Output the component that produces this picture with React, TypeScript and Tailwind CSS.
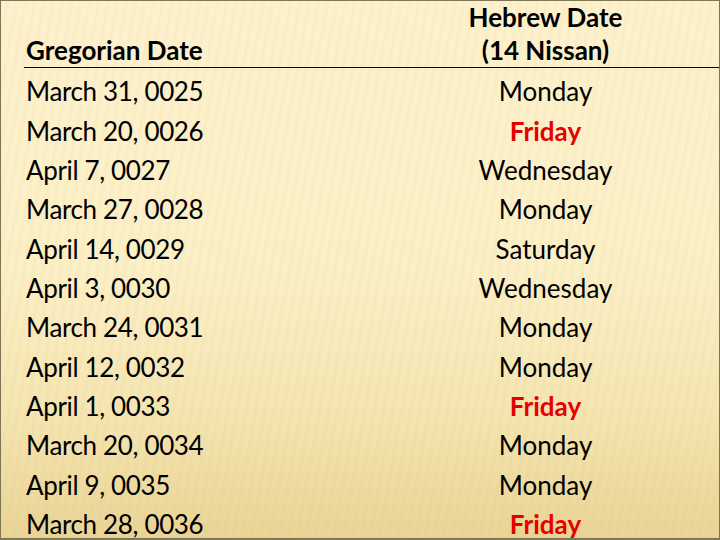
import React from "react";

const rows: [string, string, boolean][] = [
  ["March 31, 0025", "Monday", false],
  ["March 20, 0026", "Friday", true],
  ["April 7, 0027", "Wednesday", false],
  ["March 27, 0028", "Monday", false],
  ["April 14, 0029", "Saturday", false],
  ["April 3, 0030", "Wednesday", false],
  ["March 24, 0031", "Monday", false],
  ["April 12, 0032", "Monday", false],
  ["April 1, 0033", "Friday", true],
  ["March 20, 0034", "Monday", false],
  ["April 9, 0035", "Monday", false],
  ["March 28, 0036", "Friday", true],
];

export default function App() {
  return (
    <div
      className="relative w-[720px] h-[540px] overflow-hidden border border-[#7d7654] border-b-2 bg-[linear-gradient(180deg,#fdf1cd_0%,#fbefc6_50%,#f4e4b0_78%,#e9d495_100%)] text-black"
      style={{ fontFamily: "Lato, 'Open Sans', sans-serif" }}
    >
      <div className="absolute inset-0 pointer-events-none bg-[repeating-linear-gradient(100deg,rgba(255,255,255,0.0)_0px,rgba(255,255,255,0.0)_5px,rgba(200,170,90,0.07)_6px,rgba(200,170,90,0.0)_9px)]" />
      <div className="relative pl-[23px]">
        <div className="grid grid-cols-[348px_1fr] h-[67px] border-b border-black items-end pb-[2px]">
          <div className="pl-[2px] font-bold text-[26px] leading-[33px]">Gregorian Date</div>
          <div className="text-center font-bold text-[26px] leading-[33px]">
            <div>Hebrew Date</div>
            <div>(14 Nissan)</div>
          </div>
        </div>
        <div className="pt-[4px]">
          {rows.map(([g, h, red], i) => (
            <div key={i} className="grid grid-cols-[348px_1fr] h-[39.36px] items-center text-[26px]">
              <div className="pl-[2px] tracking-[-0.35px]">{g}</div>
              <div className={red ? "text-center font-bold text-[#e60000]" : "text-center"}>{h}</div>
            </div>
          ))}
        </div>
      </div>
    </div>
  );
}
